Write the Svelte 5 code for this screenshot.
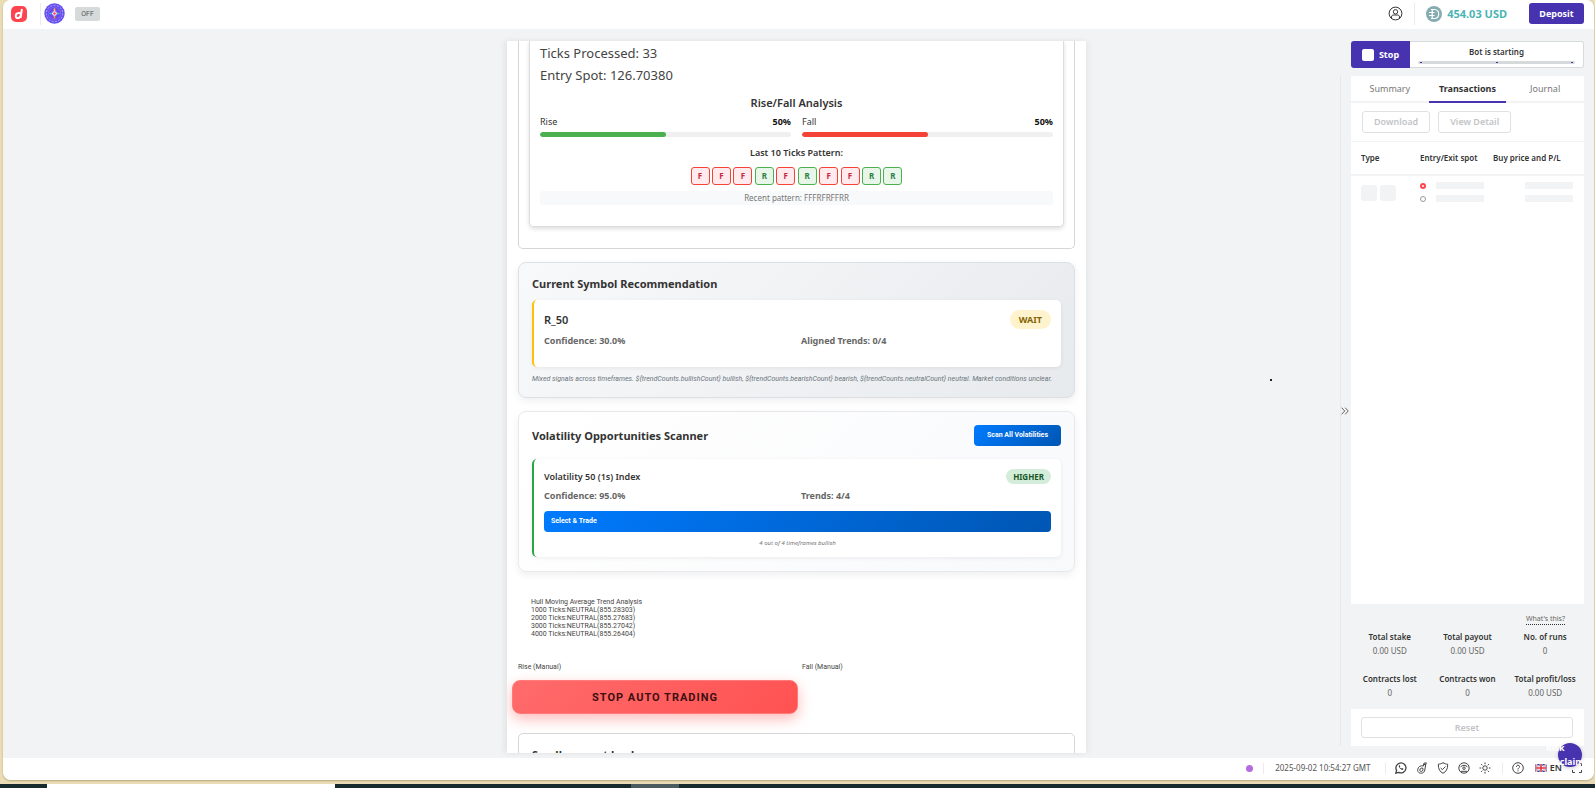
<script>
  const pattern = 'FFFRFRFFRR'.split('');
  const trends = [
    ['1000', '855.28303'],
    ['2000', '855.27683'],
    ['3000', '855.27042'],
    ['4000', '855.26404']
  ];
  const sides = [
    { name: 'Rise', value: 50 },
    { name: 'Fall', value: 50 }
  ];
  const stats = [
    ['Total stake', '0.00 USD'],
    ['Total payout', '0.00 USD'],
    ['No. of runs', '0'],
    ['Contracts lost', '0'],
    ['Contracts won', '0'],
    ['Total profit/loss', '0.00 USD']
  ];
</script>

<div class="screen">
  <div class="window">
    <header>
      <a class="logo" href="#home" aria-label="Home">
        <svg width="16" height="16" viewBox="0 0 16 16"><rect width="16" height="16" rx="5" fill="#ff444f" /><path d="M10.9 3 9.6 11.9M9.9 8.2C9.5 6.5 5.3 6.4 4.8 9.7 4.4 12.9 8.7 12.9 9.4 9.8" fill="none" stroke="#fff" stroke-width="2" stroke-linejoin="round" /></svg>
      </a>
      <i class="rule"></i>
      <svg class="emblem" width="21" height="21" viewBox="0 0 21 21">
        <circle cx="10.5" cy="10.5" r="10.2" fill="#6650ee" />
        <circle cx="10.5" cy="10.5" r="8.2" fill="none" stroke="#b5a8ff" stroke-dasharray="2 1.4" />
        <circle cx="10.5" cy="10.5" r="6.2" fill="#6a48ea" stroke="#8062f5" />
        <path d="M10.5 5.5v2.5" stroke="#ffc13d" stroke-width="1.6" /><path d="M10.5 13v2.5" stroke="#f29a3d" stroke-width="1.6" />
        <path d="M5.5 10.5H8" stroke="#39bde0" stroke-width="1.6" /><path d="M13 10.5h2.5" stroke="#58b99a" stroke-width="1.6" />
        <circle cx="10.5" cy="10.5" r="2.3" fill="#fff" /><circle cx="10.5" cy="10.5" r="1.3" fill="#ef3c64" />
      </svg>
      <button class="off">OFF</button>
      <span class="grow"></span>
      <button class="bare" aria-label="Account">
        <svg width="15" height="15" viewBox="0 0 15 15" fill="none" stroke="#333"><circle cx="7.5" cy="7.5" r="6.4" /><circle cx="7.5" cy="5.8" r="2.2" /><path d="M3.5 12.3V11c0-1.4 1-2 2-2h4c1 0 2 .6 2 2v1.3" /></svg>
      </button>
      <i class="rule acct"></i>
      <svg width="16" height="16" viewBox="0 0 16 16"><circle cx="8" cy="8" r="8" fill="#85acb0" /><path d="M5 3.5h3.2c6 0 6 9 0 9H5M3 6.5h5.5M3 9.5h5.5M6.2 3.5v9" fill="none" stroke="#fff" stroke-width="1.2" /></svg>
      <strong class="balance">454.03 USD</strong>
      <button class="deposit">Deposit</button>
    </header>

    <div class="body">
      <main>
        <section class="outer">
          <div class="tickcard">
            <p class="big">Ticks Processed: 33</p>
            <p class="big">Entry Spot: 126.70380</p>
            <h3>Rise/Fall Analysis</h3>
            <div class="two">
              {#each sides as s}
                <div>
                  <div class="between"><span>{s.name}</span><b>{s.value}%</b></div>
                  <div class="track"><div class={s.name} style="width:{s.value}%"></div></div>
                </div>
              {/each}
            </div>
            <h4>Last 10 Ticks Pattern:</h4>
            <div class="ticks">
              {#each pattern as t}<span class="t{t}">{t}</span>{/each}
            </div>
            <p class="recent">Recent pattern: {pattern.join('')}</p>
          </div>
        </section>

        <section class="panel recommend">
          <h2>Current Symbol Recommendation</h2>
          <div class="item wait">
            <div class="between"><h3>R_50</h3><span class="pill yellow">WAIT</span></div>
            <div class="facts"><span>Confidence: 30.0%</span><span>Aligned Trends: 0/4</span></div>
          </div>
          <p class="note">{'Mixed signals across timeframes. ${trendCounts.bullishCount} bullish, ${trendCounts.bearishCount} bearish, ${trendCounts.neutralCount} neutral. Market conditions unclear.'}</p>
        </section>

        <section class="panel scanner">
          <div class="between"><h2>Volatility Opportunities Scanner</h2><button class="blue scan">Scan All Volatilities</button></div>
          <div class="item higher">
            <div class="between"><h4>Volatility 50 (1s) Index</h4><span class="pill green">HIGHER</span></div>
            <div class="facts"><span>Confidence: 95.0%</span><span>Trends: 4/4</span></div>
            <button class="blue select">Select &amp; Trade</button>
            <p class="why">4 out of 4 timeframes bullish</p>
          </div>
        </section>

        <div class="hull">
          <div>Hull Moving Average Trend Analysis</div>
          {#each trends as [n, v]}<div>{n} Ticks:NEUTRAL({v})</div>{/each}
        </div>
        <div class="two manual"><span>Rise (Manual)</span><span>Fall (Manual)</span></div>
        <button class="stopauto">STOP AUTO TRADING</button>
        <section class="next"><h2>Small amount lead</h2></section>
      </main>

      <button class="bare toggle" aria-label="Collapse panel">
        <svg width="8" height="8" viewBox="0 0 8 8" fill="none" stroke="#666"><path d="m.7.7 3 3.3-3 3.3M4.2.7l3 3.3-3 3.3" /></svg>
      </button>

      <aside>
        <div class="runbar">
          <button class="stop"><i></i>Stop</button>
          <div class="status"><b>Bot is starting</b><div class="progress"><i></i><i></i><i></i></div></div>
        </div>
        <div class="drawer">
          <nav><button>Summary</button><button class="active">Transactions</button><button>Journal</button></nav>
          <div class="tools"><button disabled>Download</button><button disabled>View Detail</button></div>
          <table>
            <thead><tr><th>Type</th><th>Entry/Exit spot</th><th>Buy price and P/L</th></tr></thead>
            <tbody>
              <tr>
                <td><div class="squares"><i></i><i></i></div></td>
                <td><div class="spots"><span><i class="ring red"></i><i class="bone"></i></span><span><i class="ring"></i><i class="bone"></i></span></div></td>
                <td><div class="spots end"><i class="bone"></i><i class="bone"></i></div></td>
              </tr>
            </tbody>
          </table>
          <div class="space"></div>
          <div class="stats">
            <a class="what" href="#help">What's this?</a>
            <div class="grid">
              {#each stats as [k, v]}<div><b>{k}</b><span>{v}</span></div>{/each}
            </div>
          </div>
          <div class="reset"><button disabled>Reset</button></div>
        </div>
      </aside>
      <span class="pointer"></span>
    </div>

    <footer>
      <i class="online"></i><i class="rule"></i>
      <time>2025-09-02 10:54:27 GMT</time><i class="rule"></i>
      <div class="icons">
        <svg viewBox="0 0 12 12"><path d="M.8 11.2 1.6 8.4A5 5 0 1 1 3.7 10.4Z" stroke-width="1.3" /><path d="M4.1 3.3c-.6.7-.4 1.6.8 2.9s2.4 2 3.3 1.3l.2-.8-1.3-.7-.7.6c-.7-.2-1.4-.9-1.7-1.6l.6-.6-.6-1.2Z" fill="#333" stroke="none" /></svg>
        <svg viewBox="0 0 12 12"><path d="M10.3.8 7.9 1.3 7.5 4C4.7 3.2 2.1 4.6 1.7 7.5 1.1 12.2 8.2 12.6 8.8 8L9.6 3 10.3.8M7.1 2.8l2.6-.5M7 6.4C5.5 5.5 4 6.2 3.8 8c-.1 2 2.7 2 3.1 0Z" /></svg>
        <svg viewBox="0 0 12 12"><path d="M6 .7c1.5 1 3 1.4 4.7 1.5C10.8 6.8 9.2 9.8 6 11.3 2.8 9.8 1.2 6.8 1.3 2.2 3 2.1 4.5 1.7 6 .7ZM3.7 6l1.7 1.6L8.5 4.5" /></svg>
        <svg viewBox="0 0 12 12"><circle cx="6" cy="6" r="5.2" /><path d="M2.4 5.2C4 2.8 8 2.8 9.6 5.2M2.8 9.3h6.4" /><circle cx="6" cy="6.2" r="1.2" /></svg>
        <svg viewBox="0 0 12 12"><circle cx="6" cy="6" r="2.2" /><path d="M6 .5v1.7M6 9.8v1.7M.5 6h1.7M9.8 6h1.7M2.1 2.1l1.2 1.2M8.7 8.7l1.2 1.2M2.1 9.9l1.2-1.2M8.7 3.3l1.2-1.2" /></svg>
      </div>
      <i class="rule"></i>
      <svg class="help" viewBox="0 0 12 12"><circle cx="6" cy="6" r="5.3" /><path d="M4.4 4.8c0-2.2 3.2-2.1 3.2-.1C7.6 6 6 5.8 6 7.4M6 8.4v1" /></svg>
      <button class="bare lang">
        <svg width="12" height="8" viewBox="0 0 12 8"><path fill="#28479b" d="M0 0h12v8H0z" /><path d="m0 0 12 8M12 0 0 8" stroke="#fff" stroke-width="1.6" /><path d="m0 0 12 8M12 0 0 8" stroke="#d83547" stroke-width=".6" /><path d="M6 0v8M0 4h12" stroke="#fff" stroke-width="2.8" /><path d="M6 0v8M0 4h12" stroke="#e23344" stroke-width="1.6" /></svg>
        EN
      </button>
      <svg class="full" viewBox="0 0 12 12"><path d="M1.5 4V1.5H4M8 1.5h2.5V4M10.5 8v2.5H8M4 10.5H1.5V8" /></svg>
      <button class="risk"><span>Risk Disclaimer</span></button>
    </footer>
  </div>
  <div class="taskbar"><i class="light"></i><i class="mid"></i></div>
</div>

<style>
  :global(body) { margin: 0; overflow: hidden; }
  .screen { height: 100vh; display: flex; flex-direction: column; background: #eadcb5; color: #333; font: 9px/12px "Noto Sans", "Open Sans", sans-serif; }
  .screen * { box-sizing: border-box; }
  h2, h3, h4, p { margin: 0; }
  button { font: inherit; color: inherit; padding: 0; border: 0; cursor: pointer; }
  .bare { background: none; display: flex; align-items: center; }
  svg { display: block; flex: none; }
  .window { flex: 1; min-height: 0; margin: 0 1px 4px 3px; display: flex; flex-direction: column; background: #f2f3f4; border-radius: 8px; overflow: hidden; box-shadow: 0 1px 2px #b5a77c; }
  header { flex: none; height: 29px; padding: 0 10px 2px 8px; background: #fff; display: flex; align-items: center; }
  .rule { width: 1px; height: 22px; background: #e9ebec; flex: none; }
  header > .rule { margin-left: 13px; }
  .emblem { margin-left: 3px; }
  .off { width: 25px; height: 14px; margin-left: 10px; border-radius: 2px; background: #d6dadb; font: 7px/14px Roboto, sans-serif; color: #555; }
  .grow { flex: 1; }
  header > .acct { margin: 0 11px 0 11px; }
  .balance { margin-left: 5px; color: #4bb4b3; font: 700 11px/14px "Noto Sans", sans-serif; }
  .deposit { width: 55px; height: 21px; margin-left: 22px; border-radius: 3px; background: #4733b0; color: #fff; font-weight: 700; }
  .body { position: relative; flex: 1; min-height: 0; padding-right: 4px; display: grid; grid-template-columns: 1fr 579px 1fr; }
  main { grid-column: 2; margin: 12px 0 5px; padding: 0 11px; background: #fff; overflow: hidden; box-shadow: -3px 0 5px #e3e5e6, 3px 0 5px #e8eaeb; }
  .between { display: flex; justify-content: space-between; align-items: center; }
  .outer { height: 208px; padding: 0 10px 22px; border: 1px solid #d6d6d6; border-top: 0; border-radius: 0 0 5px 5px; }
  .tickcard { height: 186px; padding: 1px 10px; border: 1px solid #ddd; border-top: 0; border-radius: 0 0 5px 5px; box-shadow: 0 2px 4px #0002; }
  .big { font: 400 13px/22px "Noto Sans", sans-serif; color: #444; }
  .tickcard h3 { margin-top: 9px; text-align: center; font: 600 11px/16px "Noto Sans", sans-serif; }
  .two { display: grid; grid-template-columns: 1fr 1fr; gap: 11px; }
  .tickcard .two { margin-top: 5px; }
  .between b { color: #111; }
  .track { height: 5px; margin-top: 4px; border-radius: 3px; background: #f0f0f0; overflow: hidden; }
  .track div { height: 100%; border-radius: 3px; }
  .Rise { background: #4caf50; }
  .Fall { background: #f44336; }
  h4 { font: 600 9px/12px "Noto Sans", sans-serif; }
  .tickcard h4 { text-align: center; margin-top: 10px; }
  .ticks { width: 212px; margin: 8px auto 6px; display: flex; justify-content: space-between; }
  .ticks span { width: 19px; height: 18px; border: 1px solid; border-radius: 3px; text-align: center; font: 700 8px/16px "Noto Sans", sans-serif; }
  .tF { background: #ffebee; border-color: #f44336 !important; color: #c62840; }
  .tR { background: #e8f5e9; border-color: #4caf50 !important; color: #2e7d42; }
  .recent { background: #f8f9fa; border-radius: 3px; text-align: center; color: #777; font-size: 8px; line-height: 14px; }
  .panel { margin-top: 13px; padding: 13px; border: 1px solid #dce0e5; border-radius: 8px; box-shadow: 0 3px 8px #0001; }
  h2 { font: 700 11px/16px "Noto Sans", sans-serif; }
  .recommend { height: 136px; background: linear-gradient(135deg, #f8f9fa, #e7eaed); }
  .scanner { height: 161px; background: linear-gradient(135deg, #fff, #f8f9fb); border-color: #e7e9ec; }
  .item { padding: 10px; border-left: 2px solid #ffc107; border-radius: 5px; background: #fff; box-shadow: 0 1px 4px #0001; }
  .wait { height: 67px; margin-top: 8px; }
  .item h3 { font: 600 11px/19px "Noto Sans", sans-serif; }
  .pill { border-radius: 10px; font-weight: 700; }
  .yellow { padding: 0 9px; line-height: 19px; background: #fff3cd; color: #856404; }
  .green { padding: 0 7px; font-size: 8px; line-height: 15px; background: #d4edda; color: #155724; }
  .facts { display: grid; grid-template-columns: 1fr 1fr; gap: 7px; font-weight: 700; color: #666; }
  .wait .facts { margin-top: 6px; }
  .note { margin-top: 6px; white-space: nowrap; font: italic 7px/12px Roboto, sans-serif; color: #6c757d; }
  .blue { background: linear-gradient(135deg, #007bff, #0056b3); color: #fff; border-radius: 4px; font: 700 7px/21px Roboto, sans-serif; }
  .scan { width: 87px; height: 21px; }
  .higher { height: 98px; margin-top: 13px; border-color: #28a745; }
  .higher .facts { margin-top: 6px; }
  .select { display: block; width: 100%; height: 21px; margin-top: 9px; padding: 0 7px; text-align: left; line-height: 19px; }
  .why { margin-top: 5px; text-align: center; font: italic 6px/12px "Noto Sans", sans-serif; color: #777; }
  .hull { margin: 26px 13px 0; font: 7px/8px Roboto, sans-serif; color: #444; }
  .manual { margin-top: 24px; font: 7px/10px Roboto, sans-serif; color: #444; }
  .stopauto { display: block; width: 286px; height: 34px; margin: 8px 0 0 -6px; padding-top: 2px; border: 1px solid #ff7b7b; border-radius: 8px; background: linear-gradient(135deg, #ff6b6b, #ff5252); color: #3b1010; box-shadow: 0 5px 14px #ff525266; font: 700 11px/30px Roboto, sans-serif; letter-spacing: 1px; }
  .next { height: 80px; margin-top: 19px; padding: 13px; border: 1px solid #d6d6d6; border-radius: 5px; }
  aside { position: absolute; top: 12px; bottom: 12px; right: 10px; width: 233px; display: flex; flex-direction: column; }
  .toggle { position: absolute; right: 245px; top: 46px; bottom: 12px; padding: 0; border-left: 1px solid #e6e8ea; }
  .runbar { display: flex; height: 27px; }
  .stop { width: 59px; background: #4733b0; color: #fff; font-weight: 700; border-radius: 3px 0 0 3px; display: flex; align-items: center; justify-content: center; gap: 5px; }
  .stop i { width: 12px; height: 12px; background: #fff; border-radius: 2px; }
  .status { flex: 1; padding: 4px 8px; border: 1px solid #d6dadb; border-left: 0; border-radius: 0 3px 3px 0; background: #fff; text-align: center; font-size: 8px; }
  .status b { font-weight: 600; display: block; }
  .progress { height: 3px; margin-top: 3px; border-radius: 2px; background: #d6dadb; display: flex; justify-content: space-between; align-items: center; padding: 0 2px; }
  .progress i { width: 2px; height: 1px; background: #4733b0; }
  .drawer { flex: 1; min-height: 0; margin-top: 8px; background: #fff; display: flex; flex-direction: column; }
  nav { display: flex; height: 27px; border-bottom: 2px solid #f2f3f4; }
  nav button { flex: 1; height: 27px; background: none; color: #777; border-bottom: 2px solid transparent; }
  nav .active { color: #333; font-weight: 700; border-color: #4733b0; }
  .tools { height: 39px; padding: 8px 11px; display: flex; gap: 8px; border-bottom: 1px solid #f2f3f4; }
  .tools button, .reset button { height: 22px; padding: 0 11px; border: 1px solid #dfe1e2; border-radius: 3px; background: #fff; color: #c2c4c6; font-weight: 600; }
  table { width: 100%; border-collapse: collapse; table-layout: fixed; }
  th { height: 33px; padding: 0; border-bottom: 2px solid #f2f3f4; text-align: left; font: 600 8px/12px "Noto Sans", sans-serif; white-space: nowrap; }
  th:nth-child(1) { width: 69px; padding-left: 10px; }
  th:nth-child(2) { width: 73px; }
  td { padding: 6px 0 0; vertical-align: top; }
  td:first-child { padding: 9px 0 0 10px; }
  .squares { display: flex; gap: 3px; }
  .squares i { width: 16px; height: 16px; border-radius: 3px; background: #f2f3f4; }
  .spots { display: grid; gap: 6px; }
  .spots span { display: flex; gap: 10px; align-items: center; }
  .bone { width: 48px; height: 7px; background: #f2f3f4; }
  .ring { width: 6px; height: 6px; border: 1px solid #999; border-radius: 50%; }
  .red { border: 2px solid #ff444f; }
  .end { justify-content: end; padding-right: 11px; }
  .space { flex: 1; }
  .stats { height: 105px; padding-top: 10px; background: #f2f3f4; display: flex; flex-direction: column; }
  .what { align-self: flex-end; margin-right: 19px; color: #666; text-decoration: none; border-bottom: 1px dotted #333; font: 7px/10px "Noto Sans", sans-serif; }
  .grid { margin-top: 5px; display: grid; grid-template-columns: 1fr 1fr 1fr; row-gap: 14px; text-align: center; font-size: 8px; line-height: 14px; }
  .grid b { display: block; font-weight: 600; white-space: nowrap; }
  .grid span { color: #666; }
  .reset { height: 37px; padding: 8px 11px 0 10px; }
  .reset button { width: 100%; height: 21px; }
  .pointer { position: absolute; right: 322px; top: 350px; width: 2px; height: 2px; background: #222; }
  footer { position: relative; flex: none; height: 22px; padding: 0 11px 2px 0; background: #fff; display: flex; align-items: center; justify-content: flex-end; }
  footer .rule { height: 11px; }
  .online { width: 7px; height: 7px; border-radius: 50%; background: #b66be0; margin-right: 10px; }
  time { width: 121px; padding-right: 3px; text-align: center; font: 8px/12px "Noto Sans", sans-serif; color: #555; white-space: nowrap; }
  footer svg:not(.lang svg) { width: 12px; height: 12px; fill: none; stroke: #444; }
  .icons { display: flex; gap: 9px; margin: 0 11px 0 9px; }
  .help { margin: 0 11px 0 9px; }
  .lang { gap: 3px; font-weight: 600; }
  .full { margin-left: 9px; }
  .risk { position: absolute; right: 12px; top: -15px; width: 24px; height: 24px; border-radius: 50%; background: #4733b0; color: #fff; box-shadow: 0 1px 4px #0003; font: 700 9px/14px "Noto Sans", sans-serif; }
  .risk span { position: absolute; left: -12px; top: -2px; width: 48px; text-align: left; }
  .taskbar { flex: none; height: 4px; background: #172a2e; display: flex; }
  .light { width: 288px; margin-left: 47px; background: #fff; }
  .mid { width: 48px; margin-left: 296px; background: #4c5b5f; }
</style>
